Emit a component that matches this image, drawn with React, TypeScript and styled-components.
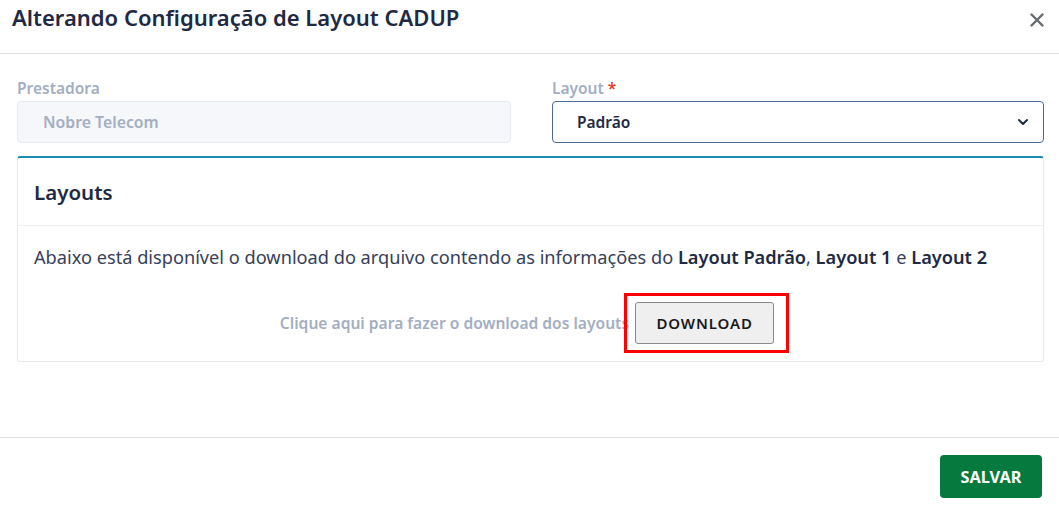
import styled, { createGlobalStyle } from "styled-components";

const GlobalStyle = createGlobalStyle`
  * { box-sizing: border-box; }
  body {
    margin: 0;
    background: #fff;
    font-family: "Noto Sans", "Open Sans", sans-serif;
    color: #1e2a44;
  }
`;

const Modal = styled.div`
  width: 1059px;
  height: 508px;
  display: flex;
  flex-direction: column;
  background: #fff;
`;

const Header = styled.header`
  height: 54px;
  display: flex;
  align-items: flex-start;
  justify-content: space-between;
  padding: 2px 14px 0 12px;
  border-bottom: 1px solid #dfe3e9;
`;

const Title = styled.h1`
  margin: 0;
  font-size: 22px;
  font-weight: 600;
  line-height: 30px;
  color: #1e2a44;
`;

const CloseButton = styled.button`
  border: none;
  background: none;
  padding: 0;
  margin-top: 10px;
  width: 16px;
  height: 16px;
  cursor: pointer;
  display: flex;
  align-items: center;
  justify-content: center;
`;

const Body = styled.div`
  flex: 1;
  padding: 25px 15px 0 17px;
  display: flex;
  flex-direction: column;
  gap: 13px;
`;

const FieldRow = styled.div`
  display: grid;
  grid-template-columns: 494px 1fr;
  column-gap: 41px;
`;

const Field = styled.div`
  display: flex;
  flex-direction: column;
  gap: 3px;
`;

const Label = styled.label`
  font-size: 15.5px;
  font-weight: 600;
  line-height: 19px;
  color: #a3aec2;

  span {
    color: #e53935;
  }
`;

const Input = styled.div<{ $disabled?: boolean }>`
  height: 42px;
  display: flex;
  align-items: center;
  justify-content: space-between;
  padding: 0 14px 0 ${(p) => (p.$disabled ? "25px" : "24px")};
  border-radius: 4px;
  font-size: ${(p) => (p.$disabled ? "15.8px" : "15.5px")};
  font-weight: 600;
  background: ${(p) => (p.$disabled ? "#f5f7fa" : "#fff")};
  border: 1px solid ${(p) => (p.$disabled ? "#e6eaf0" : "#4d6a96")};
  color: ${(p) => (p.$disabled ? "#a3aec2" : "#1e2a44")};
`;

const Card = styled.section`
  border: 1px solid #e6eaf0;
  border-top: 2px solid #1b8db0;
  border-radius: 3px;
`;

const CardHeader = styled.div`
  height: 68px;
  display: flex;
  align-items: center;
  padding: 0 16px;
  border-bottom: 1px solid #eef1f5;
  font-size: 20.5px;
  font-weight: 600;
  color: #1e2a44;
`;

const CardBody = styled.div`
  padding: 18px 16px 17px;
  display: flex;
  flex-direction: column;
  gap: 31px;
`;

const Description = styled.p`
  margin: 0;
  font-size: 18.2px;
  line-height: 27px;
  color: #36405a;

  b {
    font-weight: 600;
    color: #1e2a44;
  }
`;

const DownloadRow = styled.div`
  display: flex;
  align-items: center;
  justify-content: center;
  gap: 6px;
  padding-right: 7px;
`;

const Hint = styled.span`
  font-size: 15.6px;
  font-weight: 600;
  color: #a3aec2;
`;

const Highlight = styled.span`
  position: relative;
  display: inline-flex;

  &::after {
    content: "";
    position: absolute;
    inset: -9px -15px -9px -11px;
    border: 3px solid #ff0000;
    pointer-events: none;
  }
`;

const DownloadButton = styled.button`
  width: 139px;
  height: 42px;
  background: #efefef;
  border: 1px solid #8a8a8a;
  border-radius: 3px;
  font-family: "Noto Sans", "Open Sans", sans-serif;
  font-size: 15px;
  font-weight: 600;
  letter-spacing: 0.9px;
  color: #1a1a1a;
  cursor: pointer;
`;

const Footer = styled.footer`
  height: 71px;
  display: flex;
  align-items: flex-start;
  justify-content: flex-end;
  padding: 17px 17px 0 0;
  border-top: 1px solid #dfe3e9;
`;

const SaveButton = styled.button`
  width: 102px;
  height: 43px;
  border: none;
  border-radius: 4px;
  background: #067a3e;
  color: #fff;
  font-family: "Noto Sans", "Open Sans", sans-serif;
  font-size: 16.3px;
  font-weight: 700;
  cursor: pointer;
`;

export default function App() {
  return (
    <>
      <GlobalStyle />
      <Modal>
        <Header>
          <Title>Alterando Configuração de Layout CADUP</Title>
          <CloseButton aria-label="Fechar">
            <svg width="14" height="14" viewBox="0 0 14 14">
              <path d="M1.5 1.5 L12.5 12.5 M12.5 1.5 L1.5 12.5" stroke="#666a70" strokeWidth="2.4" strokeLinecap="round" />
            </svg>
          </CloseButton>
        </Header>
        <Body>
          <FieldRow>
            <Field>
              <Label>Prestadora</Label>
              <Input $disabled>Nobre Telecom</Input>
            </Field>
            <Field>
              <Label>
                Layout <span>*</span>
              </Label>
              <Input>
                Padrão
                <svg width="12" height="8" viewBox="0 0 12 8">
                  <path d="M2 2 L6 6 L10 2" fill="none" stroke="#1e2a44" strokeWidth="2" strokeLinecap="round" strokeLinejoin="round" />
                </svg>
              </Input>
            </Field>
          </FieldRow>
          <Card>
            <CardHeader>Layouts</CardHeader>
            <CardBody>
              <Description>
                Abaixo está disponível o download do arquivo contendo as informações do <b>Layout Padrão</b>,{" "}
                <b>Layout 1</b> e <b>Layout 2</b>
              </Description>
              <DownloadRow>
                <Hint>Clique aqui para fazer o download dos layouts</Hint>
                <Highlight>
                  <DownloadButton>DOWNLOAD</DownloadButton>
                </Highlight>
              </DownloadRow>
            </CardBody>
          </Card>
        </Body>
        <Footer>
          <SaveButton>SALVAR</SaveButton>
        </Footer>
      </Modal>
    </>
  );
}
